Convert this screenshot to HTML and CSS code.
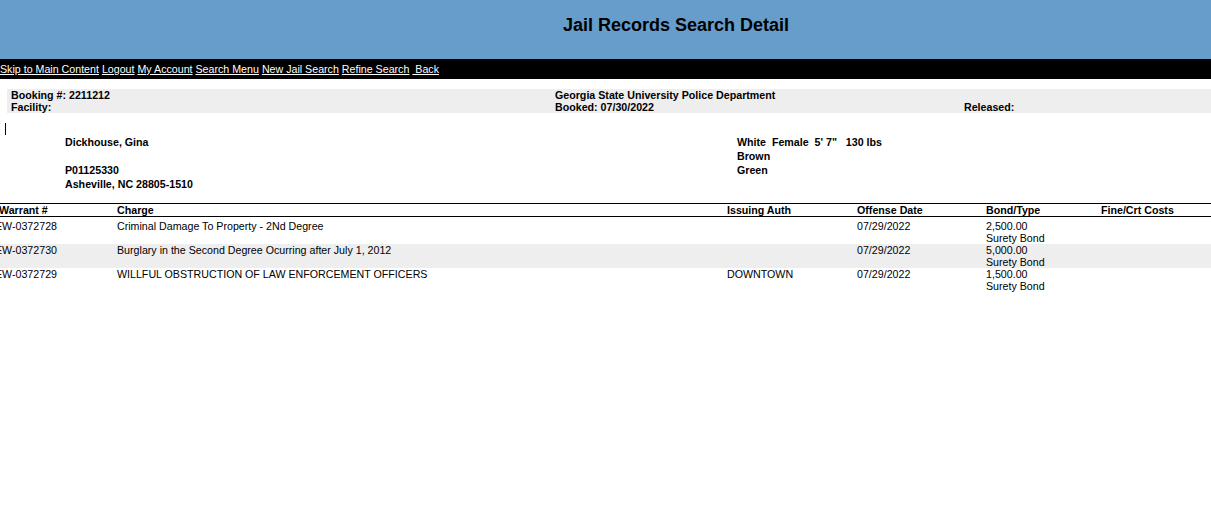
FILE: index.html
```html
<!DOCTYPE html>
<html lang="en">
<head>
  <meta charset="UTF-8">
  <title>Jail Records Search Detail</title>
  <link rel="stylesheet" href="styles.css">
</head>
<body>
  <div class="banner">
    <h1>Jail Records Search Detail</h1>
  </div>
  <div class="nav">
    <a href="#main">Skip to Main Content</a>
    <a href="#">Logout</a>
    <a href="#">My Account</a>
    <a href="#">Search Menu</a>
    <a href="#">New Jail Search</a>
    <a href="#">Refine Search</a>
    <a href="#">&nbsp;Back</a>
  </div>

  <div class="booking" id="main">
    <div>Booking #: 2211212</div>
    <div>Georgia State University Police Department</div>
    <div></div>
    <div>Facility:</div>
    <div>Booked: 07/30/2022</div>
    <div>Released:</div>
  </div>

  <div class="caret"></div>

  <div class="person">
    <div>
      <div>Dickhouse, Gina</div>
      <div>&nbsp;</div>
      <div>P01125330</div>
      <div>Asheville, NC 28805-1510</div>
    </div>
    <div>
      <div class="pre">White  Female  5' 7"   130 lbs</div>
      <div>Brown</div>
      <div>Green</div>
    </div>
  </div>

  <table class="charges">
    <colgroup>
      <col class="c-warrant">
      <col class="c-charge">
      <col class="c-auth">
      <col class="c-date">
      <col class="c-bond">
      <col>
    </colgroup>
    <thead>
      <tr>
        <th>Warrant #</th>
        <th>Charge</th>
        <th>Issuing Auth</th>
        <th>Offense Date</th>
        <th>Bond/Type</th>
        <th>Fine/Crt Costs</th>
      </tr>
    </thead>
    <tbody>
      <tr>
        <td>EW-0372728</td>
        <td>Criminal Damage To Property - 2Nd Degree</td>
        <td></td>
        <td>07/29/2022</td>
        <td>2,500.00<br>Surety Bond</td>
        <td></td>
      </tr>
      <tr class="alt">
        <td>EW-0372730</td>
        <td>Burglary in the Second Degree Ocurring after July 1, 2012</td>
        <td></td>
        <td>07/29/2022</td>
        <td>5,000.00<br>Surety Bond</td>
        <td></td>
      </tr>
      <tr>
        <td>EW-0372729</td>
        <td>WILLFUL OBSTRUCTION OF LAW ENFORCEMENT OFFICERS</td>
        <td>DOWNTOWN</td>
        <td>07/29/2022</td>
        <td>1,500.00<br>Surety Bond</td>
        <td></td>
      </tr>
    </tbody>
  </table>
</body>
</html>
```

FILE: styles.css
```css
body {
  margin: 0;
  font-family: "Liberation Sans", Arial, sans-serif;
  font-size: 10.667px;
  color: #000;
  background: #fff;
  overflow-x: hidden;
}
.banner {
  height: 59px;
  background: #669dca;
  box-sizing: border-box;
  padding: 15px 0 0 141px;
}
.banner h1 {
  margin: 0;
  font-size: 18px;
  line-height: 21px;
  text-align: center;
}
.nav {
  background: #000;
  height: 20px;
  line-height: 20px;
}
.nav a {
  color: #fff;
  text-decoration: underline;
}
.booking {
  margin: 10px 0 0 7px;
  padding: 1px 4px 0;
  height: 24px;
  box-sizing: border-box;
  background: #eee;
  display: grid;
  grid-template-columns: 544px 409px 1fr;
  line-height: 11.5px;
  font-weight: bold;
}
.caret {
  margin: 10px 0 0 5px;
  width: 1px;
  height: 12px;
  background: #000;
}
.person {
  display: grid;
  grid-template-columns: 672px 1fr;
  padding-left: 65px;
  line-height: 14px;
  font-weight: bold;
}
.pre {
  white-space: pre;
}
.charges {
  margin: 12px 0 0 -5px;
  width: calc(100% + 5px);
  border-collapse: collapse;
  table-layout: fixed;
}
.c-warrant { width: 122px; }
.c-charge { width: 610px; }
.c-auth { width: 130px; }
.c-date { width: 129px; }
.c-bond { width: 115px; }
.charges th,
.charges td {
  padding: 0;
  text-align: left;
  vertical-align: top;
  line-height: 12px;
  white-space: nowrap;
}
.charges thead tr {
  border-top: 1px solid #000;
  border-bottom: 1px solid #000;
}
.charges th {
  height: 12px;
}
.charges th:first-child {
  padding-left: 4px;
}
.charges tbody tr:first-child td {
  padding-top: 3px;
}
.charges tr.alt {
  background: #eee;
}
```
